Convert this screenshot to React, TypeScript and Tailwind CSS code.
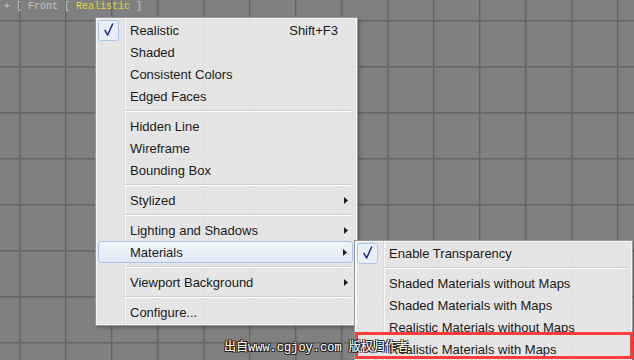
import React from "react";

type MenuEntry =
  | { sep: true }
  | {
      sep?: false;
      label: string;
      shortcut?: string;
      arrow?: boolean;
      checked?: boolean;
      active?: boolean;
    };

const displayMenu: MenuEntry[] = [
  { label: "Realistic", shortcut: "Shift+F3", checked: true },
  { label: "Shaded" },
  { label: "Consistent Colors" },
  { label: "Edged Faces" },
  { sep: true },
  { label: "Hidden Line" },
  { label: "Wireframe" },
  { label: "Bounding Box" },
  { sep: true },
  { label: "Stylized", arrow: true },
  { sep: true },
  { label: "Lighting and Shadows", arrow: true },
  { label: "Materials", arrow: true, active: true },
  { sep: true },
  { label: "Viewport Background", arrow: true },
  { sep: true },
  { label: "Configure..." },
];

const materialsMenu: MenuEntry[] = [
  { label: "Enable Transparency", checked: true },
  { sep: true },
  { label: "Shaded Materials without Maps" },
  { label: "Shaded Materials with Maps" },
  { label: "Realistic Materials without Maps" },
  { label: "Realistic Materials with Maps" },
];

const CheckBox = () => (
  <div className="ml-[2px] flex h-[21px] w-[21px] items-center justify-center rounded-[3px] border border-[#aac6ec] bg-[#e9eff8]">
    <svg width="21" height="21" viewBox="0 0 21 21" className="-m-px">
      <path
        d="M7 10.4 L9.7 15 L14.6 4"
        fill="none"
        stroke="#1d2a8c"
        strokeWidth="1.5"
        strokeLinejoin="round"
        strokeLinecap="round"
      />
    </svg>
  </div>
);

const Arrow = () => (
  <svg width="4" height="7" viewBox="0 0 4 7">
    <polygon points="0,0 4,3.5 0,7" fill="#1c1c1c" />
  </svg>
);

const MenuRow = ({ item }: { item: MenuEntry }) => {
  if (item.sep) {
    return (
      <div className="flex h-[8px] items-center pl-[29px] pr-[3px]">
        <div className="h-[2px] w-full border-t border-b border-t-[#d3d3d3] border-b-[#fbfbfb]" />
      </div>
    );
  }

  return (
    <div
      className={`${
        item.active
          ? "ml-[2px] mr-[4px] rounded-[3px] border border-[#a9c5ec] bg-[linear-gradient(#f1f5fb,#dfe8f4)]"
          : ""
      } flex h-[22px] items-center text-[#1a1a1a]`}
    >
      <div className={`${item.active ? "w-[31px]" : "w-[34px]"} flex shrink-0`}>
        {item.checked && <CheckBox />}
      </div>
      <span className="whitespace-nowrap">{item.label}</span>
      {item.shortcut && (
        <span className="ml-auto pr-[19px] whitespace-nowrap">{item.shortcut}</span>
      )}
      {item.arrow && (
        <span className={`${item.active ? "pr-[5px]" : "pr-[9px]"} ml-auto flex`}>
          <Arrow />
        </span>
      )}
    </div>
  );
};

const Menu = ({ items, className }: { items: MenuEntry[]; className: string }) => (
  <div
    className={`${className} absolute border border-[#979797] bg-[rgba(240,240,240,0.9)] pt-px pb-[2px] text-[13px] leading-none shadow-[inset_0_0_0_1px_#f7f7f7,2px_2px_3px_rgba(0,0,0,0.25)] [font-family:'Liberation_Sans',Arial,sans-serif]`}
  >
    <div className="pointer-events-none absolute top-0 bottom-0 left-[28px] w-[2px] border-l border-r border-l-[#dcdcdc] border-r-[#fafafa]" />
    <div className="relative">
      {items.map((item, index) => (
        <MenuRow key={index} item={item} />
      ))}
    </div>
  </div>
);

const App = () => {
  return (
    <div className="relative h-[360px] w-[634px] overflow-hidden bg-[#808080] bg-[linear-gradient(to_right,#666_1px,#727272_1px,#727272_2px,transparent_2px),linear-gradient(to_bottom,#666_1px,#727272_1px,#727272_2px,transparent_2px)] bg-[size:46px_46px] bg-[position:19px_20px]">
      <div className="flex gap-[6px] pl-[4px] pt-[1px] text-[10px] leading-[12px] text-[#c4c4c4] [font-family:'Liberation_Mono',monospace]">
        <span>+</span>
        <span>[</span>
        <span>Front</span>
        <span>[</span>
        <span className="text-[#e4d23a]">Realistic</span>
        <span>]</span>
      </div>

      <Menu items={displayMenu} className="left-[95px] top-[17px] w-[263px]" />
      <Menu items={materialsMenu} className="left-[354px] top-[240px] w-[279px]" />

      {/* annotation on top of the screenshot */}
      <div className="absolute left-[355px] top-[332px] h-[27px] w-[278px] border-[3px] border-[#ff3c3c]" />
      <div className="absolute left-[224px] top-[341px] text-[12px] leading-[14px] text-white [font-family:'Liberation_Mono','Noto_Sans_CJK_SC',monospace] [text-shadow:1px_1px_0_#222,-1px_-1px_0_#222,1px_-1px_0_#222,-1px_1px_0_#222]">
        出自www.cgjoy.com 版权归作者
      </div>
    </div>
  );
};

export default App;
